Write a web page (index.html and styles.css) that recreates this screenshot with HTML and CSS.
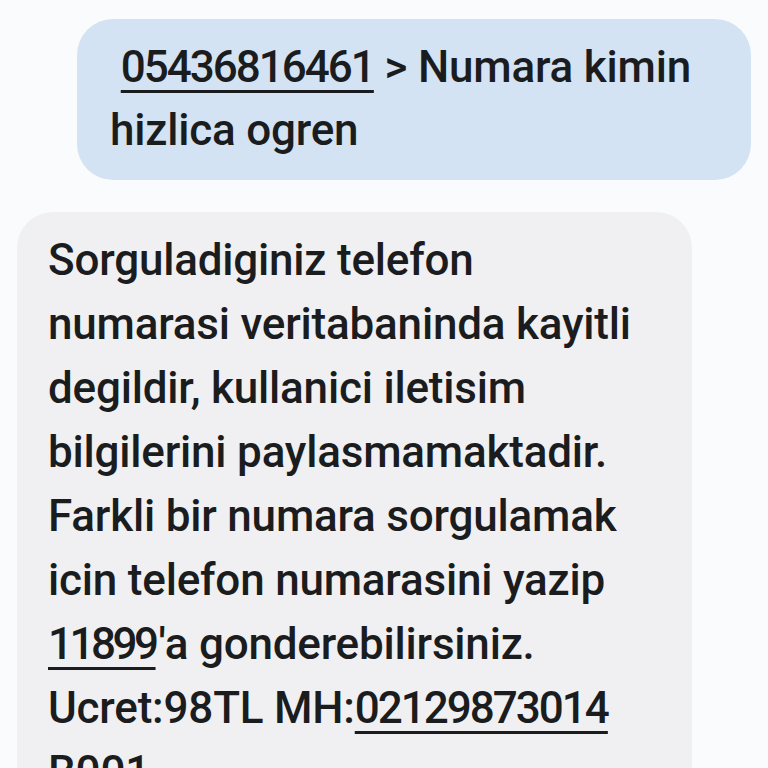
FILE: index.html
```html
<html><head><meta http-equiv="Content-Type" content="text/html; charset=UTF-8">
<title>Mesajlar</title>
<link rel="stylesheet" href="styles.css">
</head>
<body>

  <div class="thread">

    <div class="msg sent">
      &nbsp;<span class="num">05436816461</span> &gt; Numara kimin hizlica ogren
    </div>

    <div class="msg recv">
      Sorguladiginiz telefon numarasi veritabaninda kayitli degildir, kullanici iletisim bilgilerini paylasmamaktadir. Farkli bir numara sorgulamak icin telefon numarasini yazip <span class="num short">11899</span>'a gonderebilirsiniz. Ucret:98TL MH:<span class="num">02129873014</span> B001
    </div>

  </div>

</body></html>
```

FILE: styles.css
```css
body
{
  margin : 0;
  background : #fafbfd;
  font-family : Roboto, "Open Sans", sans-serif;
  color : #1b1c1e;
  overflow : hidden;
}

.thread
{
  display : flex;
  flex-direction : column;
  gap : 32px;
  padding : 19px 17px 0 17px;
}

.msg
{
  font-size : 44px;
  font-weight : 500;
  line-height : 64px;
  letter-spacing : -0.2px;
  border-radius : 36px;
}

.msg.sent
{
  align-self : flex-end;
  width : 608px;
  margin-left : 60px;
  padding : 17px 33px 18px 33px;
  background : #d3e3f3;
  line-height : 63px;
}

.msg.recv
{
  align-self : flex-start;
  width : 612px;
  padding : 16px 32px 20px 31px;
  background : #f0f0f2;
}

.num
{
  letter-spacing : -2px;
  text-decoration : underline;
  text-decoration-thickness : 3px;
  text-underline-offset : 8px;
}

.num.short
{
  letter-spacing : -3.5px;
  padding-right : 3px;
}
```
